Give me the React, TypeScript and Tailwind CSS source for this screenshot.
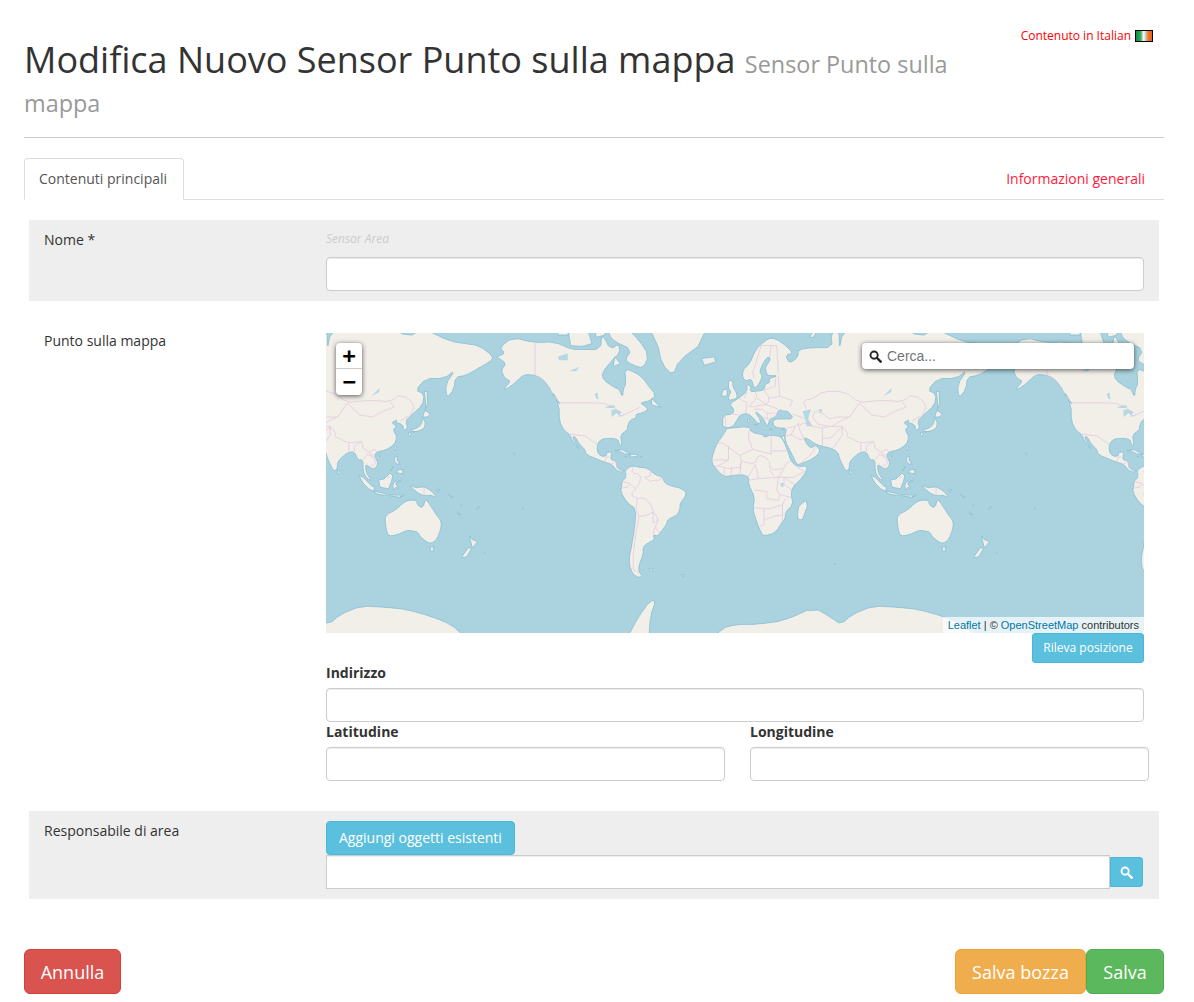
import React from 'react';

type Pt = [number, number];

// lon/lat outlines, projected to web mercator at zoom 1 (world = 512px)
const project = ([lon, lat]: Pt): string => {
  const x = 409.6 + lon * (512 / 360);
  const rad = (lat * Math.PI) / 180;
  const y = 150 - (512 / (2 * Math.PI)) * Math.log(Math.tan(Math.PI / 4 + rad / 2));
  return `${x.toFixed(1)} ${y.toFixed(1)}`;
};

// corner cutting, the tiles in the reference have no hard angles
const smooth = (s: Pt[], closed: boolean): Pt[] => {
  const out: Pt[] = closed ? [] : [s[0]];
  const n = s.length;
  for (let i = 0; i < (closed ? n : n - 1); i++) {
    const a = s[i];
    const b = s[(i + 1) % n];
    out.push([a[0] * 0.75 + b[0] * 0.25, a[1] * 0.75 + b[1] * 0.25]);
    out.push([a[0] * 0.25 + b[0] * 0.75, a[1] * 0.25 + b[1] * 0.75]);
  }
  if (!closed) out.push(s[n - 1]);
  return out;
};

const toPath = (shapes: Pt[][], closed: boolean) =>
  shapes
    .map((s) => {
      const pts = s.length >= 8 ? smooth(s, closed) : s;
      return 'M' + pts.map(project).join('L') + (closed ? 'Z' : '');
    })
    .join('');

const LAND: Pt[][] = [
  // North and Central America
  [[-168,66],[-162,67],[-166,68.5],[-157,71],[-141,69.7],[-128,70],[-115,68],[-108,68],[-95,68],[-94,72],[-88,68],[-82,69.5],[-81.5,67],[-87,65],[-94,61],[-93,58.5],[-85,55.5],[-82,55],[-79.5,51.5],[-79,55],[-77,57],[-78,62.5],[-70,61],[-65,59],[-61,56],[-56,52.5],[-60,50],[-67,49],[-65,48],[-61,46],[-66,44],[-70,43.5],[-70,41.5],[-74,40.5],[-76,37],[-76,35],[-81,32],[-80,27],[-80.5,25],[-82,27],[-83,29.5],[-89,30],[-94,29.5],[-97,27],[-97.5,22],[-95,18.5],[-91,18.5],[-90.5,21],[-87,21.5],[-88,16],[-84,15.5],[-83.5,11],[-81,9],[-77.5,8.5],[-80,7.5],[-84,9],[-87,13],[-92,14.5],[-96,16],[-105,19.5],[-106,23],[-109.5,26],[-113,31],[-114.7,31],[-112,26],[-110,23],[-112,25],[-115,29],[-117,32.5],[-120.5,34.5],[-124,40],[-124,48],[-130,54.5],[-135,58.5],[-140,60],[-148,60.5],[-152,59],[-158,56],[-164,54.5],[-158,58],[-162,59],[-165,62],[-161,64],[-168,66]],
  // Arctic Canada
  [[-90,74],[-80,74],[-68,70.5],[-61,66.5],[-65,62.5],[-72,63.5],[-78,65],[-73,68],[-85,70],[-89,71.5]],
  [[-118,73],[-105,73.5],[-101,69.5],[-108,68.8],[-116,69]],
  [[-125,74.5],[-116,74.5],[-118,71.5],[-125,71.5]],
  [[-100,74],[-90,74],[-92,71.5],[-98,71]],
  [[-85,66],[-81,64],[-86,63]],
  [[-59,51],[-53,47],[-59,48]],
  [[-128,53],[-125,50],[-123.5,48.5],[-128,51]],
  // Greenland, Iceland
  [[-73,78],[-60,82],[-30,83.5],[-18,80],[-22,70],[-40,65],[-44,60],[-52,64],[-55,70],[-68,76]],
  [[-24,65.5],[-15,66],[-14,64.5],[-22,63.5]],
  // South America
  [[-77.5,8.5],[-75,11],[-72,12],[-68,11],[-62,10.5],[-57,6],[-51,4],[-50,0],[-44,-2.5],[-39,-3.5],[-35,-6],[-35,-9],[-39,-14],[-39,-18],[-41,-22],[-48,-25],[-48.5,-28],[-53,-33],[-55,-35],[-58,-34],[-57,-37],[-62,-39],[-65,-41],[-65,-45],[-68,-50],[-68,-53],[-65,-55],[-70,-55],[-74,-52],[-75,-47],[-73,-40],[-71,-30],[-70,-18],[-76,-14],[-81,-6],[-80,-2],[-80,1],[-77,4],[-77.5,8.5]],
  [[-61,-51.5],[-58,-51.5],[-59,-52.5]],
  [[-38,-54],[-36,-54],[-37,-55]],
  // Caribbean and Pacific specks
  [[-85,22],[-80,23],[-74,20],[-78,20],[-82,22]],
  [[-74,20],[-69,19.5],[-69,18.3],[-74,18]],
  [[-78,18.4],[-76.3,18.2],[-77,17.8]],
  [[-67,18.5],[-65.7,18.3],[-67,18]],
  [[-156.5,20.8],[-155,19.8],[-155.7,19]],
  [[-150,-17.4],[-149,-17.7],[-149.8,-18]],
  [[69,-49],[70.5,-49.2],[69.5,-49.8]],
  [[-176.5,-43.8],[-176,-44],[-176.6,-44.2]],
  // Africa
  [[-6,35.8],[10,37],[11,33.5],[20,32],[20,30.5],[25,32],[32,31],[34,28],[37,21],[39,15],[43,11.5],[51,12],[48,5],[40,-3],[39,-8],[40.5,-15],[35,-20],[35,-24],[32.5,-27],[28,-33],[20,-35],[18,-33],[15,-27],[12,-18],[13.5,-10],[9,-1],[9.5,4],[5,6],[-4,5],[-8,4.5],[-13,9],[-17,14.5],[-16,20],[-13,27],[-9.5,31],[-6,35.8]],
  [[32,31],[34.5,31.5],[35,28],[34,28]],
  [[49.5,-12],[50.5,-16],[47,-25],[44,-25],[43.5,-21],[44.5,-16]],
  // Eurasia
  [[-9,37],[-9,43],[-2,43.5],[-1,46],[-4.5,48.5],[2,51],[8,54],[8,57],[11,56],[10,54],[14,54],[20,54.5],[21,57],[24,57.5],[23.5,59],[30,60],[23,60],[21.5,61],[21,63],[25,65.5],[22,66],[18,63],[17,61],[19,60],[16.5,57],[14,55.5],[13,55.5],[11,59],[8,58],[5,59],[5,62],[10,64],[14,68],[20,70],[25,71],[32,70],[41,67],[35,66.5],[38,64],[44,66],[44,68],[54,68.5],[68,68.5],[67,72],[73,72.5],[73,68],[75,72],[84,73],[100,76],[113,74],[130,71],[140,73],[160,70],[170,69.5],[180,69],[190,66],[187,64.5],[179,62.5],[170,60],[163,59.5],[162,55],[157,51],[156,57],[163,62],[155,59],[142,59],[135,54.5],[141,53],[140,48],[132,43],[128,40],[129.5,36],[126.5,34.5],[126,38],[121,39],[122,40.5],[118,39],[122,37],[119,35],[122,31],[120,26],[114,22.5],[108,21.5],[106,19],[109,13],[105,9],[100,13.5],[100,8],[104,1.5],[101,3],[98,8],[98,16],[94.5,16],[92,21.5],[87,21],[80,15],[80,10],[77.5,8],[73,17],[72,21],[68,23.5],[61,25],[57,26],[50,30],[48,30],[51,25],[54,24],[56,26],[60,22],[55,17],[45,13],[43,13],[39,21],[35,28],[34.5,31.5],[36,36],[30,36],[27,37],[26,40],[29,41],[31,41],[41,41],[37,45],[33,45],[31,46],[28,42],[24,41],[23,38],[22,37],[19,42],[13,45.5],[18,40],[16,38],[12,42],[8,44],[3,43],[0,39],[-2,37],[-5.5,36],[-9,37]],
  // European islands
  [[-5,50],[1,51],[1,53],[-2,56],[-2,58],[-5,58.5],[-5,55],[-3,54],[-5,52]],
  [[-10,52],[-6,52],[-6,55],[-9,54.5]],
  [[13,38],[15.5,38],[15,36.8]],
  [[8.3,41],[9.7,41],[9.5,39],[8.5,39]],
  [[24,35.5],[26,35.2],[24,35]],
  [[32.5,35],[34,35.5],[33.5,34.7]],
  [[52,71],[56,73],[60,75],[58,73],[55,71]],
  // Asia islands
  [[80,9.5],[82,7.5],[80.5,6]],
  [[141,54],[143,54],[143.5,49],[142,46],[142,50]],
  [[140,41.5],[142,39],[141,36],[139,35],[136,34],[132,34],[131,34.5],[136,36],[139,38]],
  [[140,42],[141.5,45.5],[145.5,43.5],[143,42]],
  [[130,33.5],[132,33],[131,31],[130,32]],
  [[133,34],[134.5,34],[133.5,33]],
  [[121,25],[122,25],[120.8,22],[120,23.5]],
  [[109,20],[111,20],[110,18.2]],
  [[120.5,18.5],[122,18.5],[122,16],[124,13],[121,13.5],[120,16]],
  [[122,9],[126,9.5],[126,6.5],[122,7]],
  [[118,10],[119.5,11.5],[117.5,8.5]],
  [[95,5.5],[98,4],[104,-2],[106,-3],[105.5,-6],[102,-4],[98,0]],
  [[105.5,-6],[110,-6.5],[114.5,-7.8],[114,-8.7],[108,-7.8]],
  [[109,2],[113,3],[117,7],[119,5],[118,1],[116,-4],[110,-3]],
  [[120,1],[125,1.5],[121,0],[123,-4],[121,-3],[119.5,-5.5],[119,-2]],
  [[131,-1],[135,-3.5],[141,-2.5],[146,-5.5],[150.5,-10.5],[146,-8.5],[143,-9],[138,-8],[133,-4]],
  [[150,-5.5],[152,-4.5],[151,-6.5]],
  [[116,-8.5],[125,-8.5],[124,-10],[117,-9]],
  [[126,-9],[127,-8.5],[124,-10.3]],
  [[178,-17],[180,-16.5],[178,-18.5]],
  [[165,-21],[167,-22.3],[164,-20.2]],
  [[159,-9],[161,-10],[158,-8]],
  [[167,-15],[167.5,-16],[166.7,-15.7]],
  // Australia, NZ
  [[114,-22],[122,-18],[126,-14],[130,-12],[136,-12],[136,-15],[140,-17.5],[142,-11],[145,-15],[149,-21],[153,-26],[153,-30],[150,-37],[146,-39],[143,-38.5],[138,-35],[137,-33],[134,-32],[129,-31.5],[124,-33.5],[118,-35],[115,-34],[113.5,-26]],
  [[145,-41],[148,-41],[147,-43.5],[146,-43.5]],
  [[173,-35],[175,-37],[178.5,-38],[175,-41.5],[174,-39]],
  [[172.5,-41],[174,-42],[171,-46],[167,-46.5],[170,-43.5]],
  // Antarctica
  [[-180,-85],[-100,-75],[-76,-73],[-68,-68],[-60,-63.5],[-56,-63.5],[-60,-68],[-61,-74],[-40,-78],[-25,-76],[-10,-71],[0,-70],[15,-70],[35,-69],[55,-65.5],[68,-68.5],[74,-70],[82,-67.5],[97,-65],[115,-65.5],[128,-66],[146,-68],[160,-70],[170,-73],[172,-78],[180,-85]],
];

const WATER: Pt[][] = [
  [[47,45],[53,46],[51,41],[54,37],[50,37],[49,41]],
  [[58,46],[61,46],[60,44]],
  [[-92,47],[-85,48],[-85,46.5],[-90,46.5]],
  [[-87.5,45.5],[-85,46],[-82,45.5],[-80,44.5],[-82,43],[-84,44],[-87,42]],
  [[-83,42],[-79,43],[-76,44],[-79,43.3],[-82,42.8]],
  [[-125,66],[-118,67],[-118,65],[-124,65]],
  [[-117,61.5],[-110,63],[-112,61.5]],
  [[-99,53],[-97,53.5],[-96.5,50.5],[-98,51]],
  [[31.5,0],[34,0],[33.5,-3],[32,-2.5]],
  [[104,52],[110,55.5],[109,53.5]],
];

const BORDERS: Pt[][] = [
  // North America
  [[-141,69.7],[-141,60],[-135,58.5],[-130,55]],
  [[-123,49],[-95,49],[-89,48],[-83,46],[-82,42],[-76,44],[-70,46],[-67,47]],
  [[-117,32.5],[-106,31.5],[-97,26]],
  [[-92,14.5],[-91,18],[-89,18]],
  [[-89,14],[-87,13],[-84,15],[-83.5,11]],
  // South America
  [[-72,12],[-73,7],[-67,6],[-67,1],[-70,-4],[-74,-8],[-69,-11],[-65,-10],[-60,-14],[-58,-20],[-54,-25],[-57,-30],[-53,-33]],
  [[-60,8],[-60,5],[-64,4],[-60,1],[-57,2],[-54,2],[-51,4]],
  [[-80,1],[-75,0],[-70,-4]],
  [[-80,-3.5],[-76,-3],[-75,-1]],
  [[-70,-18],[-69,-11]],
  [[-70,-18],[-68,-23],[-70,-33],[-72,-45],[-72,-52],[-68,-53]],
  [[-68,-23],[-62,-22],[-58,-20],[-58,-27],[-54,-25]],
  [[-57,-30],[-58,-34]],
  // Africa
  [[-9,27],[-13,27]],
  [[-9,27],[3,19],[12,23],[25,20],[25,32]],
  [[9,30],[10,37]],
  [[9,30],[12,23]],
  [[25,22],[37,22]],
  [[-17,16],[-5,16],[-5,25]],
  [[3,19],[4,15],[14,13],[16,20],[24,16],[24,9],[34,10],[36,14.5],[39,15]],
  [[4,15],[3,6.5]],
  [[14,13],[9,4.5]],
  [[14,13],[16,3],[30,4],[34,10]],
  [[-8,10],[-8,4.5]],
  [[-12,12],[-5,10],[3,11],[4,15]],
  [[-3,5],[-3,11]],
  [[30,4],[34,4],[42,-1.5]],
  [[34,4],[41,4],[48,8],[43,11.5]],
  [[34,4],[34,-1],[39,-4.5]],
  [[30,4],[29,-5],[31,-8],[40,-10.5]],
  [[13,-5],[22,-6],[22,-11],[30,-12],[31,-8]],
  [[12,-17],[24,-18],[33,-15],[35,-11]],
  [[33,-15],[33,-25],[32.5,-27]],
  [[20,-18],[20,-28],[17,-29]],
  [[20,-25],[28,-22.5],[33,-22]],
  [[-5,16],[-12,12],[-15,11]],
  [[16,3],[9,2]],
  [[24,9],[27,5]],
  // Eurasia
  [[-7,37],[-7,42],[-9,42]],
  [[-2,43.5],[3,43]],
  [[2,51],[8,49],[7,44]],
  [[6,51],[8,54]],
  [[14,54],[15,51],[9,47.5],[13,47],[17,48],[22,48],[24,51],[20,54.5]],
  [[15,51],[19,49.5],[22,48]],
  [[24,51],[31,52],[30,60]],
  [[20,54.5],[28,56],[28,59]],
  [[22,48],[30,46],[28,42]],
  [[13,46],[19,46],[22,44],[22.5,41]],
  [[26,41],[22.5,41],[19.5,42]],
  [[22,44],[28,44]],
  [[31,52],[40,50],[38,47]],
  [[13,59],[12,61],[18,69],[25,69],[29,69]],
  [[25,69],[24,66]],
  [[29,69],[30,61]],
  [[40,43.5],[46,42],[49,41]],
  [[36,36],[42,37],[44.5,39],[44,37],[46,33],[48,30]],
  [[34.5,31.5],[39,32],[42,37]],
  [[39,32],[46,29],[48,30]],
  [[45,13],[52,19],[55,22],[56,26]],
  [[44,37],[48,39],[54,37],[61,36],[61,30],[61,25]],
  [[61,36],[66,37],[71,37],[75,37]],
  [[61,30],[67,30],[70,33],[75,37],[79,33],[78,31],[81,30],[88,27],[97,28]],
  [[68,23.5],[71,27],[75,32],[75,37]],
  [[50,46],[47,50],[55,51],[61,54],[77,54],[87,49],[98,50],[107,50],[117,49.5],[125,53],[135,48],[131,43]],
  [[87,49],[80,42],[74,40],[68,37]],
  [[54,42],[56,45],[61,44],[66,41],[71,42],[80,42]],
  [[54,42],[58,38],[66,37]],
  [[87,49],[96,43],[105,42],[112,45],[120,47],[117,49.5]],
  [[124,40],[130,42.5]],
  [[97,28],[98,24],[102,21],[106,23],[108,21.5]],
  [[92,21.5],[92,25],[97,28]],
  [[88,27],[88,22]],
  [[98,16],[101,20],[105,18],[107,14],[103,11]],
  [[102,21],[106,18]],
  [[100,6.5],[102,6]],
  [[141,-2.5],[141,-9]],
  [[115,4],[117,4.2]],
];

const landPath = toPath(LAND, true);
const waterPath = toPath(WATER, true);
const borderPath = toPath(BORDERS, false);

const WorldMap = () => (
  <svg viewBox="0 0 818 300" className="block w-full h-full" preserveAspectRatio="none">
    <rect width="818" height="300" fill="#aad3df" />
    {[-512, 0, 512].map((dx) => (
      <g key={dx} transform={`translate(${dx} 0)`} strokeLinejoin="round">
        <path d={landPath} fill="#f2efe9" stroke="#88bfd2" strokeWidth="0.8" />
        <path d={waterPath} fill="#b5d9e4" />
        <path d={borderPath} fill="none" stroke="#e3c3df" strokeWidth="0.7" />
      </g>
    ))}
  </svg>
);

const Magnifier = ({ className, color }: { className: string; color: string }) => (
  <svg viewBox="0 0 14 14" className={className}>
    <circle cx="5.5" cy="5.5" r="3.9" fill="none" stroke={color} strokeWidth="2" />
    <line x1="8.6" y1="8.6" x2="12.6" y2="12.6" stroke={color} strokeWidth="2.6" strokeLinecap="round" />
  </svg>
);

const TextInput = ({ className = '' }: { className?: string }) => (
  <input
    type="text"
    className={`block h-[34px] bg-white border border-[#ccc] rounded-[4px] shadow-[inset_0_1px_1px_rgba(0,0,0,0.075)] ${className}`}
  />
);

const FieldLabel = ({ children }: { children: React.ReactNode }) => (
  <label className="block font-bold text-[14px] leading-[20px] mb-[5px] text-[#333]">{children}</label>
);

export default function App() {
  return (
    <div className="w-[1194px] px-[24px] pr-[30px] pb-[8px] font-['Open_Sans',sans-serif] text-[14px] leading-[20px] text-[#333] bg-white">
      {/* Header */}
      <div className="flex justify-between pt-[40px] pb-[19px] border-b border-[#ccc]">
        <h1 className="w-[950px] text-[36px] leading-[39px] font-normal text-[#333]">
          Modifica Nuovo Sensor Punto sulla mappa{' '}
          <small className="text-[23.4px] leading-none font-normal text-[#999]">Sensor Punto sulla mappa</small>
        </h1>
        <div className="flex items-start mr-[11px] -mt-[12px] text-[12px] leading-[16px] text-[#ff0000]">
          <span>Contenuto in Italian</span>
          <span className="ml-[4px] mt-[2px] w-[18px] h-[12px] border border-black bg-[linear-gradient(90deg,#0c8a3c_0%,#3fae66_30%,#ffffff_48%,#c9c9c9_60%,#f47b2a_75%,#e85d10_100%)]" />
        </div>
      </div>

      {/* Tabs */}
      <div className="flex justify-between items-end mt-[20px] border-b border-[#ddd] h-[42px]">
        <div className="-mb-px h-[42px] w-[160px] pl-[14px] pt-[10px] bg-white border border-[#ddd] border-b-white rounded-t-[4px] text-[#555]">
          Contenuti principali
        </div>
        <a className="mr-[19px] pb-[10px] text-[#ff1a3c]">Informazioni generali</a>
      </div>

      <div className="mx-[5px] mt-[20px]">
        {/* Nome */}
        <div className="flex bg-[#eee] px-[15px] pt-[10px] pb-[10px]">
          <div className="w-[282px] shrink-0">Nome *</div>
          <div className="w-[818px]">
            <div className="h-[27px] text-[12px] leading-[18px] italic text-[#ccc]">Sensor Area</div>
            <TextInput className="w-full" />
          </div>
        </div>

        {/* Punto sulla mappa */}
        <div className="flex px-[15px] pt-[30px] pb-[30px]">
          <div className="w-[282px] shrink-0">Punto sulla mappa</div>
          <div className="w-[818px] pt-[2px]">
            <div className="relative h-[300px] overflow-hidden">
              <WorldMap />
              <div className="absolute left-[10px] top-[10px] w-[26px] rounded-[4px] bg-white shadow-[0_1px_5px_rgba(0,0,0,0.65)] font-['DejaVu_Sans_Mono',monospace] font-bold text-black text-[22px] text-center">
                <div className="h-[26px] leading-[26px] border-b border-[#ccc]">+</div>
                <div className="h-[26px] leading-[26px]">−</div>
              </div>
              <div className="absolute right-[10px] top-[10px] w-[272px] h-[26px] flex items-center rounded-[4px] bg-white shadow-[0_1px_5px_rgba(0,0,0,0.65)] font-['Liberation_Sans',sans-serif]">
                <Magnifier className="ml-[7px] w-[13px] h-[13px] shrink-0" color="#222" />
                <span className="ml-[5px] text-[14px] text-[#757575]">Cerca...</span>
              </div>
              <div className="absolute right-0 bottom-0 px-[5px] h-[16px] leading-[16px] bg-white/70 font-['Liberation_Sans',sans-serif] text-[11px] text-[#333]">
                <span className="text-[#0078a8]">Leaflet</span> | © <span className="text-[#0078a8]">OpenStreetMap</span> contributors
              </div>
            </div>
            <div className="flex justify-end">
              <button className="h-[30px] w-[112px] text-[12px] text-white bg-[#5bc0de] border border-[#46b8da] rounded-[3px]">
                Rileva posizione
              </button>
            </div>
            <FieldLabel>Indirizzo</FieldLabel>
            <TextInput className="w-full" />
            <div className="flex gap-[25px] -mr-[5px]">
              <div className="w-[399px]">
                <FieldLabel>Latitudine</FieldLabel>
                <TextInput className="w-full" />
              </div>
              <div className="w-[399px]">
                <FieldLabel>Longitudine</FieldLabel>
                <TextInput className="w-full" />
              </div>
            </div>
          </div>
        </div>

        {/* Responsabile di area */}
        <div className="flex bg-[#eee] px-[15px] pt-[10px] pb-[10px]">
          <div className="w-[282px] shrink-0">Responsabile di area</div>
          <div className="w-[818px]">
            <button className="block h-[34px] px-[12px] text-[14px] text-white bg-[#5bc0de] border border-[#46b8da] rounded-[4px]">
              Aggiungi oggetti esistenti
            </button>
            <div className="flex items-center">
              <TextInput className="w-[784px] rounded-none" />
              <button className="flex items-center justify-center w-[33px] h-[30px] bg-[#5bc0de] border border-[#46b8da] rounded-r-[3px]">
                <Magnifier className="w-[13px] h-[13px]" color="#fff" />
              </button>
            </div>
          </div>
        </div>
      </div>

      {/* Footer */}
      <div className="flex justify-between mt-[50px]">
        <button className="h-[45px] w-[97px] text-[18px] text-white bg-[#d9534f] border border-[#d43f3a] rounded-[6px]">
          Annulla
        </button>
        <div className="flex">
          <button className="h-[45px] w-[131px] text-[18px] text-white bg-[#f0ad4e] border border-[#eea236] rounded-[6px]">
            Salva bozza
          </button>
          <button className="h-[45px] w-[78px] text-[18px] text-white bg-[#5cb85c] border border-[#4cae4c] rounded-[6px]">
            Salva
          </button>
        </div>
      </div>
    </div>
  );
}
